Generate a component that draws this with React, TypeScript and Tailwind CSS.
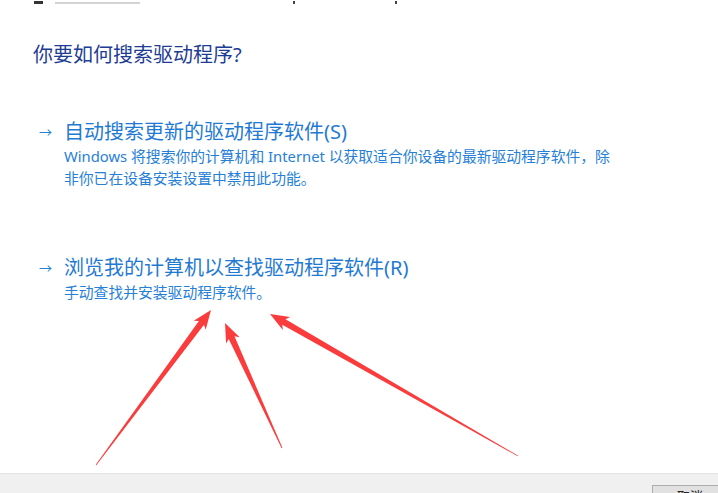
type Arrow = { tx: number; ty: number; hx: number; hy: number };

// red callout arrows: thin tail, widening shaft, barbed head
const arrows: Arrow[] = [
  { tx: 96, ty: 465, hx: 211, hy: 310 },
  { tx: 282, ty: 448, hx: 225, hy: 323 },
  { tx: 518, ty: 456, hx: 270, hy: 314 },
];

function arrowPoints({ tx, ty, hx, hy }: Arrow) {
  const len = Math.hypot(hx - tx, hy - ty);
  const dx = (hx - tx) / len;
  const dy = (hy - ty) / len;
  const nx = -dy;
  const ny = dx;
  const headLen = 16;
  const neckX = hx - dx * headLen;
  const neckY = hy - dy * headLen;
  const barbX = hx - dx * (headLen + 3);
  const barbY = hy - dy * (headLen + 3);
  const pts: [number, number][] = [
    [tx + nx * 0.4, ty + ny * 0.4],
    [neckX + nx * 3.2, neckY + ny * 3.2],
    [barbX + nx * 7.5, barbY + ny * 7.5],
    [hx, hy],
    [barbX - nx * 7.5, barbY - ny * 7.5],
    [neckX - nx * 3.2, neckY - ny * 3.2],
    [tx - nx * 0.4, ty - ny * 0.4],
  ];
  return pts.map(([x, y]) => `${x.toFixed(1)},${y.toFixed(1)}`).join(" ");
}

interface Option {
  title: string;
  lines: string[];
}

const options: Option[] = [
  {
    title: "自动搜索更新的驱动程序软件(S)",
    lines: [
      "Windows 将搜索你的计算机和 Internet 以获取适合你设备的最新驱动程序软件，除",
      "非你已在设备安装设置中禁用此功能。",
    ],
  },
  {
    title: "浏览我的计算机以查找驱动程序软件(R)",
    lines: ["手动查找并安装驱动程序软件。"],
  },
];

const font = {
  fontFamily: '"Noto Sans", "Noto Sans CJK SC", sans-serif',
};

export default function App() {
  return (
    <div
      className="relative w-[718px] h-[493px] bg-white overflow-hidden flex flex-col"
      style={font}
    >
      {/* title bar remnant, only the bottom edge is visible */}
      <div className="h-[4px] overflow-hidden relative">
        <div className="flex items-end h-[4px]">
          <div className="ml-[34px] w-[9px] h-[3px] bg-[#333]" />
          <div className="ml-[12px] w-[85px] h-[2px] bg-[#d4d4d4]" />
          <div className="ml-[153px] w-[2px] h-[3px] bg-[#444]" />
          <div className="ml-[100px] w-[2px] h-[3px] bg-[#444]" />
        </div>
      </div>

      <div className="flex-1 pl-[33px]">
        <h1 className="mt-[37px] text-[20px] leading-[28px] text-[#1d3c94] font-normal">
          你要如何搜索驱动程序?
        </h1>

        {options.map((opt, i) => (
          <div
            key={i}
            className={`flex ${i === 0 ? "mt-[50px]" : "mt-[66px]"}`}
          >
            <span className="w-[31px] pl-[6px] text-[13px] leading-[26px] text-[#2a7fd6]">
              →
            </span>
            <div className="flex flex-col">
              <span className="text-[20px] leading-[26px] text-[#1f7ad4]">
                {opt.title}
              </span>
              {opt.lines.map((line, j) => (
                <span
                  key={j}
                  className="text-[14.8px] leading-[22px] text-[#2680d8] whitespace-nowrap"
                >
                  {line}
                </span>
              ))}
            </div>
          </div>
        ))}
      </div>

      {/* dialog footer with the cancel button cut off */}
      <div className="h-[20px] bg-[#f0f0f0] border-t border-[#e3e3e3] overflow-hidden flex justify-end">
        <div className="mt-[11px] -mr-[10px] w-[76px] h-[23px] bg-[#e1e1e1] border border-[#adadad] flex justify-center items-start">
          <span className="text-[13px] leading-[20px] text-[#222]">取消</span>
        </div>
      </div>

      <svg
        className="absolute inset-0 pointer-events-none"
        width={718}
        height={493}
        viewBox="0 0 718 493"
      >
        {arrows.map((a, i) => (
          <polygon key={i} points={arrowPoints(a)} fill="#fa3c3c" />
        ))}
      </svg>
    </div>
  );
}
